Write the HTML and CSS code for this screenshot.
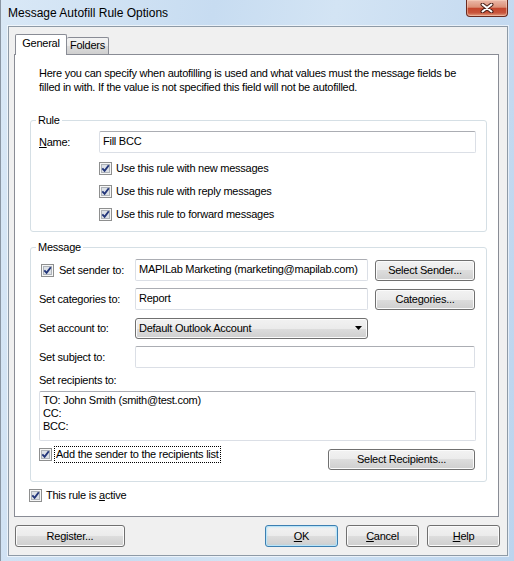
FILE: index.html
```html
<!DOCTYPE html>
<html>
<head>
<meta charset="utf-8">
<title>Message Autofill Rule Options</title>
<link rel="stylesheet" href="styles.css">
</head>
<body>
<div class="window">
  <div class="titlebar">
    <span class="title">Message Autofill Rule Options</span>
    <div class="close">
      <svg width="14" height="10" viewBox="0 0 14 10">
        <path d="M2.5 1.5 L11.5 8.5 M11.5 1.5 L2.5 8.5" stroke="#4a2018" stroke-width="4" stroke-linecap="round" fill="none"/>
        <path d="M2.5 1.5 L11.5 8.5 M11.5 1.5 L2.5 8.5" stroke="#ffffff" stroke-width="2" stroke-linecap="round" fill="none"/>
      </svg>
    </div>
  </div>
  <div class="client">
    <div class="tabs">
      <div class="tab active">General</div>
      <div class="tab inactive">Folders</div>
    </div>
    <div class="panel">
      <p class="intro">Here you can specify when autofilling is used and what values must the message fields be<br>filled in with. If the value is not specified this field will not be autofilled.</p>

      <fieldset class="group rule">
        <legend>Rule</legend>
        <div class="name-row">
          <span class="name-label"><u>N</u>ame:</span>
          <div class="field name-field">Fill BCC</div>
        </div>
        <div class="checks">
          <div class="check-row">
            <svg class="cb" width="13" height="13" viewBox="0 0 13 13"><rect x="0.5" y="0.5" width="12" height="12" fill="#f6f6f6" stroke="#8e8f8f"/><rect x="2.5" y="2.5" width="8" height="8" fill="#dde1e6" stroke="#aeb3b9"/><path d="M3.3 6.3 L5.6 8.8 L9.8 3.2" fill="none" stroke="#23367a" stroke-width="1.9"/></svg>
            <span>Use this rule with new messages</span>
          </div>
          <div class="check-row">
            <svg class="cb" width="13" height="13" viewBox="0 0 13 13"><rect x="0.5" y="0.5" width="12" height="12" fill="#f6f6f6" stroke="#8e8f8f"/><rect x="2.5" y="2.5" width="8" height="8" fill="#dde1e6" stroke="#aeb3b9"/><path d="M3.3 6.3 L5.6 8.8 L9.8 3.2" fill="none" stroke="#23367a" stroke-width="1.9"/></svg>
            <span>Use this rule with reply messages</span>
          </div>
          <div class="check-row">
            <svg class="cb" width="13" height="13" viewBox="0 0 13 13"><rect x="0.5" y="0.5" width="12" height="12" fill="#f6f6f6" stroke="#8e8f8f"/><rect x="2.5" y="2.5" width="8" height="8" fill="#dde1e6" stroke="#aeb3b9"/><path d="M3.3 6.3 L5.6 8.8 L9.8 3.2" fill="none" stroke="#23367a" stroke-width="1.9"/></svg>
            <span>Use this rule to forward messages</span>
          </div>
        </div>
      </fieldset>

      <fieldset class="group message">
        <legend>Message</legend>
        <div class="msg-grid">
          <div class="lbl sender-lbl">
            <svg class="cb" width="13" height="13" viewBox="0 0 13 13"><rect x="0.5" y="0.5" width="12" height="12" fill="#f6f6f6" stroke="#8e8f8f"/><rect x="2.5" y="2.5" width="8" height="8" fill="#dde1e6" stroke="#aeb3b9"/><path d="M3.3 6.3 L5.6 8.8 L9.8 3.2" fill="none" stroke="#23367a" stroke-width="1.9"/></svg>
            <span>Set sender to:</span>
          </div>
          <div class="field">MAPILab Marketing (marketing@mapilab.com)</div>
          <div class="btn">Select Sender...</div>

          <div class="lbl">Set categories to:</div>
          <div class="field">Report</div>
          <div class="btn">Categories...</div>

          <div class="lbl">Set account to:</div>
          <div class="select">
            <span>Default Outlook Account</span>
            <svg width="7" height="4" viewBox="0 0 7 4"><path d="M0 0 H7 L3.5 4 Z" fill="#000"/></svg>
          </div>
          <div></div>

          <div class="lbl">Set subject to:</div>
          <div class="field span2"></div>
        </div>
        <div class="rcpt-lbl">Set recipients to:</div>
        <div class="textarea">TO: John Smith (smith@test.com)<br>CC:<br>BCC:</div>
        <div class="bottom-row">
          <div class="add-sender">
            <svg class="cb" width="13" height="13" viewBox="0 0 13 13"><rect x="0.5" y="0.5" width="12" height="12" fill="#f6f6f6" stroke="#8e8f8f"/><rect x="2.5" y="2.5" width="8" height="8" fill="#dde1e6" stroke="#aeb3b9"/><path d="M3.3 6.3 L5.6 8.8 L9.8 3.2" fill="none" stroke="#23367a" stroke-width="1.9"/></svg>
            <span class="focus">Add the sender to the recipients list</span>
          </div>
          <div class="btn recipients-btn">Select Recipients...</div>
        </div>
      </fieldset>

      <div class="check-row active-row">
        <svg class="cb" width="13" height="13" viewBox="0 0 13 13"><rect x="0.5" y="0.5" width="12" height="12" fill="#f6f6f6" stroke="#8e8f8f"/><rect x="2.5" y="2.5" width="8" height="8" fill="#dde1e6" stroke="#aeb3b9"/><path d="M3.3 6.3 L5.6 8.8 L9.8 3.2" fill="none" stroke="#23367a" stroke-width="1.9"/></svg>
        <span>This rule is <u>a</u>ctive</span>
      </div>
    </div>

    <div class="buttons">
      <div class="btn big register">Register...</div>
      <div class="spacer"></div>
      <div class="btn big default"><u>O</u>K</div>
      <div class="btn big"><u>C</u>ancel</div>
      <div class="btn big"><u>H</u>elp</div>
    </div>
  </div>
</div>
</body>
</html>
```
FILE: styles.css
```css
body {
  margin: 0;
  font-family: "Liberation Sans", Arial, sans-serif;
  font-size: 11px;
  letter-spacing: -0.25px;
  color: #000;
  background: #fff;
}

.window {
  width: 514px;
  height: 561px;
  box-sizing: border-box;
  overflow: hidden;
  display: flex;
  flex-direction: column;
  background: linear-gradient(100deg, #d9e8f6 0%, #c7dcf1 35%, #d3e4f4 55%, #bcd4ee 100%);
  border-left: 1px solid #8a96a3;
}

.titlebar {
  height: 26px;
  flex: none;
  display: flex;
  justify-content: space-between;
  align-items: flex-start;
}

.title {
  font-size: 12px;
  letter-spacing: 0;
  line-height: 26px;
  margin-left: 7px;
  color: #000;
}

.close {
  width: 42px;
  height: 17px;
  margin-right: 6px;
  box-sizing: border-box;
  border: 1px solid #6a2a1f;
  border-top: none;
  border-radius: 0 0 4px 4px;
  background: linear-gradient(#ebb9a9 0%, #dc9077 45%, #c4462d 52%, #c8553b 80%, #e3a084 100%);
  box-shadow: inset 0 0 0 1px rgba(255, 220, 200, 0.45);
  display: flex;
  align-items: center;
  justify-content: center;
}

.client {
  margin-left: 7px;
  width: 500px;
  height: 530px;
  box-sizing: border-box;
  border: 1px solid #8e9aa6;
  box-shadow: 0 0 0 1px rgba(255, 255, 255, 0.6);
  background: #f0f0f0;
  padding: 7px 0 0 5px;
}

.tabs {
  display: flex;
  align-items: flex-end;
  height: 20px;
  margin-left: 1px;
}

.tab {
  box-sizing: border-box;
  border: 1px solid #898c95;
  border-bottom: none;
  border-radius: 2px 2px 0 0;
  text-align: center;
}

.tab.active {
  width: 52px;
  height: 21px;
  margin-bottom: -1px;
  background: #fff;
  position: relative;
  z-index: 1;
  line-height: 17px;
}

.tab.inactive {
  width: 42px;
  height: 17px;
  border-left: none;
  background: linear-gradient(#f3f3f3, #ebebeb 50%, #dddddd 50%, #cfcfcf);
  line-height: 15px;
}

.panel {
  width: 485px;
  height: 463px;
  box-sizing: border-box;
  border: 1px solid #898c95;
  background: #fff;
  padding: 11px 0 0 15px;
}

.intro {
  margin: 0 0 0 9px;
  line-height: 14px;
}

.group {
  margin: 0;
  width: 457px;
  min-width: 0;
  box-sizing: border-box;
  border: 1px solid #d5dfe5;
  border-radius: 3px;
  padding: 4px 10px 9px 8px;
}

.group legend {
  padding: 0 2px;
  margin-left: -3px;
  line-height: 14px;
}

.rule {
  margin-top: 19px;
}

.message {
  margin-top: 8px;
  padding-top: 5px;
  padding-bottom: 11px;
}

.name-row {
  display: flex;
  align-items: center;
  height: 22px;
}

.name-label {
  width: 60px;
}

.field {
  box-sizing: border-box;
  height: 22px;
  border: 1px solid #dbdfe6;
  border-top-color: #abadb3;
  border-radius: 2px;
  background: #fff;
  padding: 0 3px;
  line-height: 19px;
  white-space: nowrap;
  overflow: hidden;
}

.name-field {
  flex: 1;
}

.checks {
  margin-left: 60px;
  padding-top: 7px;
  display: flex;
  flex-direction: column;
  gap: 7px;
}

.check-row {
  display: flex;
  align-items: center;
  gap: 4px;
  height: 16px;
}

.cb {
  flex: none;
  display: block;
}

.msg-grid {
  display: grid;
  grid-template-columns: 89px 233px 100px;
  grid-auto-rows: 22px;
  column-gap: 7px;
  row-gap: 7px;
  align-items: center;
}

.lbl {
  white-space: nowrap;
}

.sender-lbl {
  display: flex;
  align-items: center;
  gap: 5px;
  margin-left: 2px;
}

.span2 {
  grid-column: 2 / 4;
}

.btn {
  box-sizing: border-box;
  height: 21px;
  border: 1px solid #707070;
  border-radius: 3px;
  background: linear-gradient(#f2f2f2, #ebebeb 50%, #dddddd 50%, #cfcfcf);
  box-shadow: inset 0 0 0 1px #fbfbfb;
  text-align: center;
  line-height: 19px;
  white-space: nowrap;
}

.select {
  box-sizing: border-box;
  height: 21px;
  border: 1px solid #707070;
  border-radius: 3px;
  background: linear-gradient(#f2f2f2, #ebebeb 50%, #dddddd 50%, #cfcfcf);
  box-shadow: inset 0 0 0 1px #fbfbfb;
  display: flex;
  align-items: center;
  justify-content: space-between;
  padding: 0 5px 0 3px;
  white-space: nowrap;
}

.rcpt-lbl {
  margin-top: 4px;
  line-height: 16px;
}

.textarea {
  margin-top: 3px;
  height: 50px;
  box-sizing: border-box;
  border: 1px solid #dbdfe6;
  border-top-color: #abadb3;
  border-radius: 2px;
  background: #fff;
  padding: 2px 3px;
  line-height: 13px;
}

.bottom-row {
  margin-top: 5px;
  display: flex;
  justify-content: space-between;
  align-items: flex-start;
}

.add-sender {
  display: flex;
  align-items: center;
  gap: 2px;
  height: 17px;
}

.focus {
  border: 1px dotted #000;
  padding: 0 1px;
  line-height: 15px;
}

.recipients-btn {
  width: 147px;
  margin-top: 3px;
  margin-right: 1px;
}

.active-row {
  margin-top: 5px;
  margin-left: -1px;
}

.buttons {
  display: flex;
  margin-top: 8px;
  margin-left: 1px;
  width: 485px;
  gap: 8px;
}

.spacer {
  flex: 1;
}

.btn.big {
  width: 73px;
  height: 22px;
  line-height: 20px;
}

.btn.register {
  width: 110px;
}

.btn.default {
  border-color: #3c7fb1;
  box-shadow: inset 0 0 0 1px #b9e4f8, inset 0 0 3px #8fd3f3;
}
```
